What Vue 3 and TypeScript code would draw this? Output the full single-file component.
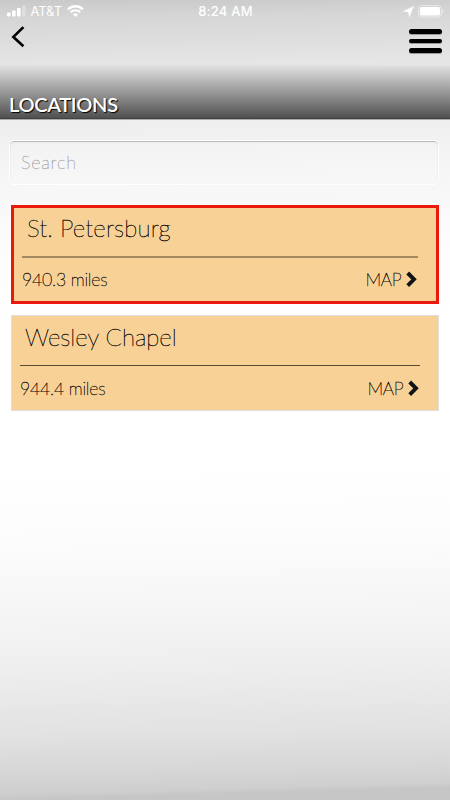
<script setup lang="ts">
import { ref } from 'vue'

interface Place {
  name: string
  distance: string
}

const query = ref('')
const selected = ref(0)
const places: Place[] = [
  { name: 'St. Petersburg', distance: '940.3 miles' },
  { name: 'Wesley Chapel', distance: '944.4 miles' },
]
</script>

<template>
  <div class="screen">
    <div class="status">
      <div class="carrier">
        <svg class="signal" width="19" height="12" viewBox="0 0 19 12" fill="#fff">
          <rect x="0" y="7.6" width="3.6" height="4" rx="1" />
          <rect x="5" y="5.4" width="3.6" height="6.2" rx="1" />
          <rect x="10" y="2.9" width="3.6" height="8.7" rx="1" />
          <rect x="15" y="0.2" width="3.6" height="11.4" rx="1" opacity=".3" />
        </svg>
        <span class="network">AT&amp;T</span>
        <svg class="wifi" width="17" height="12" viewBox="0 0 17 12" fill="none" stroke="#fff">
          <path d="M1 4.4a10.8 10.8 0 0 1 15 0" stroke-width="2.5" />
          <path d="M3.7 7.2a6.9 6.9 0 0 1 9.6 0" stroke-width="2.2" />
          <path d="M8.5 12 5.9 9.4a3.8 3.8 0 0 1 5.2 0z" fill="#fff" stroke="none" />
        </svg>
      </div>
      <span class="time">8:24 AM</span>
      <div class="power">
        <svg width="11" height="11" viewBox="0 0 11 11" fill="#fff">
          <path d="M10.8.2 6.2 10.8 5.4 5.9.2 5.4z" stroke="#fff" stroke-width=".4" />
        </svg>
        <svg width="26" height="13" viewBox="0 0 26 13" fill="none">
          <rect x=".6" y=".6" width="22.8" height="11.4" rx="3" stroke="#fff" stroke-opacity=".5" />
          <rect x="2" y="2" width="20" height="8.6" rx="1.6" fill="#fff" />
          <path d="M24.5 4.2c1.5.6 1.5 3.6 0 4.2z" fill="#fff" fill-opacity=".6" />
        </svg>
      </div>
    </div>

    <nav class="nav">
      <button class="icon-button" aria-label="Back">
        <svg width="14" height="22" viewBox="0 0 14 22" fill="none" stroke="#000" stroke-width="2.7">
          <path d="M12.4 1.1 2.4 10.9l10 9.3" />
        </svg>
      </button>
      <button class="icon-button menu" aria-label="Menu">
        <span></span><span></span><span></span>
      </button>
    </nav>

    <header class="heading"><h1>LOCATIONS</h1></header>

    <main class="content">
      <input v-model="query" class="search" type="text" placeholder="Search" />
      <section
        v-for="(place, i) in places"
        :key="place.name"
        class="card"
        :class="{ selected: i === selected }"
        @click="selected = i"
      >
        <h2>{{ place.name }}</h2>
        <div class="details">
          <span class="distance">{{ place.distance }}</span>
          <span class="map">
            <span>MAP</span>
            <svg width="11" height="17" viewBox="0 0 11 17" fill="none" stroke="#111416" stroke-width="3.9">
              <path d="m1.7 2 6.3 6.3-6.3 6.3" />
            </svg>
          </span>
        </div>
      </section>
    </main>
  </div>
</template>

<style>
body {
  margin: 0;
}
</style>

<style scoped>
.screen {
  box-sizing: border-box;
  width: 450px;
  height: 800px;
  overflow: hidden;
  display: flex;
  flex-direction: column;
  font-family: Lato, "Liberation Sans", sans-serif;
  color: #000;
  background:
    linear-gradient(178.4deg, transparent 795px, #c6c6c6 800px),
    linear-gradient(179deg, #c9c9c9 0, #d6d6d6 20px, #e5e5e5 65px, #eee 120px, #f6f6f6 180px, #fcfcfc 250px, #fff 330px, #fff 470px, #fcfcfc 540px, #f7f7f7 600px, #eee 670px, #e2e2e2 735px, #d6d6d6 775px, #c9c9c9 804px);
}
.status {
  height: 22px;
  display: grid;
  grid-template-columns: 1fr auto 1fr;
  align-items: center;
  padding: 0 6px 0 7px;
  color: #fff;
  font: 13px/22px Inter, "Liberation Sans", sans-serif;
}
.carrier {
  display: flex;
  align-items: center;
}
.signal {
  margin-right: 4.5px;
}
.network {
  letter-spacing: -.1px;
  margin-right: 5px;
}
.time {
  font-weight: 500;
  letter-spacing: .2px;
}
.power {
  display: flex;
  align-items: center;
  justify-content: flex-end;
  gap: 4px;
}
.nav {
  height: 43px;
  box-sizing: border-box;
  display: flex;
  justify-content: space-between;
  align-items: flex-start;
  padding: 4px 8px 0 11px;
}
.icon-button {
  border: 0;
  padding: 0;
  background: none;
  display: flex;
}
.menu {
  flex-direction: column;
  gap: 5px;
  padding-top: 3px;
}
.menu span {
  width: 33px;
  height: 4.5px;
  border-radius: 2.5px;
  background: #000;
  box-shadow: 0 1px #999;
}
.heading {
  height: 55px;
  box-sizing: border-box;
  padding: 28px 9px 0;
  border-bottom: 1px solid #aaa;
  background: linear-gradient(#e2e2e2, #999 27px, #505050 53px, #333 54px);
}
h1 {
  margin: 0;
  font-size: 20px;
  line-height: 23px;
  font-weight: 600;
  letter-spacing: -.3px;
  color: #fff;
  text-shadow: 1px 1px 1px #000;
}
.content {
  display: flex;
  flex-direction: column;
  padding: 20px 11px 0;
}
.search {
  box-sizing: border-box;
  height: 45px;
  margin: 0 0 20px -2px;
  width: 430px;
  padding: 0 11px 1px;
  border: 1px solid #fff;
  border-radius: 5px;
  outline: 0;
  background: rgba(255, 255, 255, .12);
  box-shadow: inset 0 1px 1px #b5b5b5;
  font: 200 18px Lato, sans-serif;
  letter-spacing: .8px;
}
.search::placeholder {
  color: #999;
  opacity: 1;
  -webkit-text-stroke: .3px #999;
}
.card {
  padding: 0 18px 0 8px;
  height: 94px;
  margin-bottom: 11px;
  border: 1px solid #dedede;
  background: #f8d197;
  -webkit-text-stroke: .4px #000;
}
.card.selected {
  height: 93px;
  border: 3px solid #e9190e;
}
h2 {
  box-sizing: border-box;
  height: 50px;
  margin: 0;
  padding: 6px 5px 0;
  border-bottom: 1px solid #5c4b35;
  font-size: 24px;
  line-height: 30px;
  font-weight: 200;
}
.selected h2 {
  padding-top: 5px;
  border-bottom: 2px solid #a58a61;
  letter-spacing: .15px;
}
.details {
  display: flex;
  justify-content: space-between;
  align-items: center;
  height: 44px;
  font-size: 17.6px;
  font-weight: 200;
  letter-spacing: -.2px;
}
.selected .details {
  height: 43px;
}
.map {
  display: flex;
  align-items: center;
  gap: 4px;
  margin-right: 1.5px;
}
</style>
